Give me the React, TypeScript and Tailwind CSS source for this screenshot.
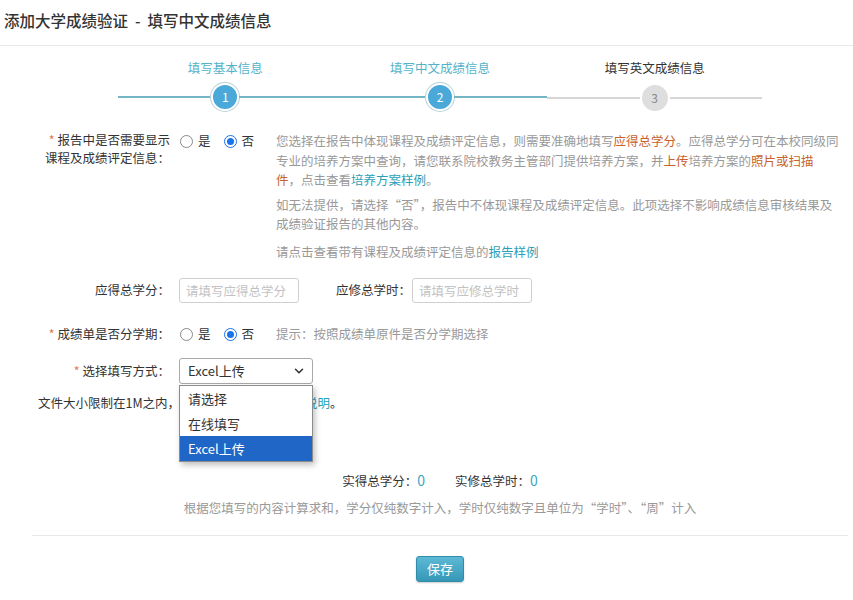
import { ChevronDown } from "lucide-react";

const steps = [
	{ label: "填写基本信息", num: 1, done: true, left: true, right: true },
	{ label: "填写中文成绩信息", num: 2, done: true, left: true, right: true },
	{ label: "填写英文成绩信息", num: 3, done: false, left: false, right: false },
];

function Radio({ checked }: { checked?: boolean }) {
	if (checked) {
		return (
			<span className="w-[13px] h-[13px] rounded-full border border-[#1a73e8] bg-white flex items-center justify-center">
				<span className="w-[7px] h-[7px] rounded-full bg-[#1a73e8]" />
			</span>
		);
	}
	return <span className="w-[13px] h-[13px] rounded-full border border-[#8a8a8a] bg-white" />;
}

function YesNo() {
	return (
		<div className="w-[96px] ml-[10px] h-[20px] flex items-center text-[#333]">
			<Radio />
			<span className="ml-[5px]">是</span>
			<span className="ml-[13px]">
				<Radio checked />
			</span>
			<span className="ml-[5px]">否</span>
		</div>
	);
}

function App() {
	return (
		<main className="w-[853px] h-[600px] overflow-hidden bg-white text-[#333] text-[12.5px] font-['Noto_Sans_CJK_SC','Noto_Sans',sans-serif]">
			<header className="h-[46px] border-b border-[#e8e8e8] pl-[4px] pt-[9px]">
				<h1 className="text-[15.5px] leading-[22px] font-medium text-[#333]">
					添加大学成绩验证 &nbsp;-&nbsp; 填写中文成绩信息
				</h1>
			</header>

			<section className="ml-[118px] w-[644px] flex pt-[13px]">
				{steps.map((s) => (
					<div key={s.num} className="flex-1 flex flex-col items-center">
						<p className={`leading-[18px] ${s.done ? "text-[#55b3c9]" : "text-[#333]"}`}>{s.label}</p>
						<div className="mt-[6px] w-full flex items-center">
							<div className={`flex-1 h-[2px] ${s.left ? "bg-[#74b6c6]" : "bg-[#d6d6d6]"}`} />
							{s.done ? (
								<div className="w-[28px] h-[28px] rounded-full bg-[#4ba9d9] border-2 border-white ring-1 ring-[#b8d2da] flex items-center justify-center text-white text-[12px]">
									{s.num}
								</div>
							) : (
								<div className="w-[30px] h-[30px] rounded-full bg-[#dedede] border-2 border-white flex items-center justify-center text-[#888] text-[12px]">
									{s.num}
								</div>
							)}
							<div className={`flex-1 h-[2px] ${s.right ? "bg-[#74b6c6]" : "bg-[#d6d6d6]"}`} />
						</div>
					</div>
				))}
			</section>

			<section className="ml-[32px] mr-[5px] mt-[18px]">
				<div className="flex items-start">
					<label className="w-[138px] text-right leading-[18px]">
						<span className="text-[#e0764e]">*</span> 报告中是否需要显示
						<br />
						课程及成绩评定信息：
					</label>
					<YesNo />
					<div className="w-[572px] leading-[19.5px] text-[#999]">
						<p className="mb-[5px]">
							您选择在报告中体现课程及成绩评定信息，则需要准确地填写<span className="text-[#c8622c]">应得总学分</span>。应得总学分可在本校同级同
							<br />
							专业的培养方案中查询，请您联系院校教务主管部门提供培养方案，并<span className="text-[#c8622c]">上传</span>培养方案的<span className="text-[#c8622c]">照片或扫描</span>
							<br />
							<span className="text-[#c8622c]">件</span>，点击查看<span className="text-[#2a9fb8]">培养方案样例</span>。
						</p>
						<p className="mb-[8px]">
							如无法提供，请选择“否”，报告中不体现课程及成绩评定信息。此项选择不影响成绩信息审核结果及
							<br />
							成绩验证报告的其他内容。
						</p>
						<p>
							请点击查看带有课程及成绩评定信息的<span className="text-[#2a9fb8]">报告样例</span>
						</p>
					</div>
				</div>

				<div className="flex items-center mt-[17px]">
					<label className="w-[138px] text-right">应得总学分：</label>
					<input
						className="ml-[9px] w-[120px] h-[25px] border border-[#cfcfcf] rounded-[3px] px-[6px] text-[12.5px] placeholder:text-[#c2c2c2] outline-none"
						placeholder="请填写应得总学分"
					/>
					<label className="ml-[37px]">应修总学时：</label>
					<input
						className="ml-[1px] w-[120px] h-[25px] border border-[#cfcfcf] rounded-[3px] px-[6px] text-[12.5px] placeholder:text-[#c2c2c2] outline-none"
						placeholder="请填写应修总学时"
					/>
				</div>

				<div className="flex items-center mt-[21px]">
					<label className="w-[138px] text-right">
						<span className="text-[#e0764e]">*</span> 成绩单是否分学期：
					</label>
					<YesNo />
					<p className="text-[#999]">提示：按照成绩单原件是否分学期选择</p>
				</div>

				<div className="flex items-center mt-[14px]">
					<label className="w-[138px] text-right">
						<span className="text-[#e0764e]">*</span> 选择填写方式：
					</label>
					<div className="relative ml-[9px] w-[134px] h-[26px] border border-[#a9a9a9] rounded-[3px] bg-white flex items-center justify-between pl-[8px] pr-[6px]">
						<span className="text-[13px]">Excel上传</span>
						<ChevronDown size={14} strokeWidth={2.6} className="text-[#333]" />
						<ul className="absolute left-[-1px] top-[26px] w-[134px] bg-white border border-[#8c8c8c] shadow-[2px_3px_6px_rgba(0,0,0,0.25)] text-[13px] z-10">
							<li className="h-[25px] leading-[25px] pl-[8px]">请选择</li>
							<li className="h-[25px] leading-[25px] pl-[8px]">在线填写</li>
							<li className="h-[25px] leading-[25px] pl-[8px] bg-[#1f66c6] text-white">Excel上传</li>
						</ul>
					</div>
				</div>

				<p className="mt-[10px] pl-[6px] leading-[18px]">
					文件大小限制在1M之内，请下载模板并查看<span className="text-[#2a9fb8]">填写说明</span>。
				</p>

				<p className="mt-[59px] leading-[18px] text-center">
					实得总学分：<span className="text-[14px] text-[#3aa6c0]">0</span>
					<span className="ml-[30px]">实修总学时：</span>
					<span className="text-[14px] text-[#3aa6c0]">0</span>
				</p>
				<p className="mt-[9px] leading-[18px] text-center text-[#999]">
					根据您填写的内容计算求和，学分仅纯数字计入，学时仅纯数字且单位为“学时”、“周”计入
				</p>

				<div className="mt-[18px] border-t border-[#e8e8e8] pt-[20px] flex justify-center">
					<button className="w-[48px] h-[26px] rounded-[3px] border border-[#2f8cab] bg-gradient-to-b from-[#5dbad6] to-[#3597b6] text-white text-[13px] shadow-[0_1px_2px_rgba(0,0,0,0.2)]">
						保存
					</button>
				</div>
			</section>
		</main>
	);
}

export default App;
